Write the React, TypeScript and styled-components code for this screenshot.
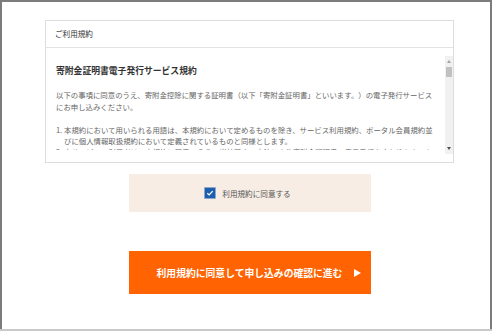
import React from "react";
import styled, { createGlobalStyle } from "styled-components";

const GlobalStyle = createGlobalStyle`
  html, body {
    margin: 0;
    padding: 0;
    background: #c9c9c9;
  }
  body {
    font-family: "Noto Sans CJK JP", "Noto Sans", sans-serif;
    text-spacing-trim: space-all;
  }
  * { box-sizing: border-box; }
`;

const Frame = styled.div`
  width: 492px;
  height: 329px;
  background: #ffffff;
  border: 2px solid #7c7c7c;
  border-bottom: none;
  overflow: hidden;
`;

const Column = styled.div`
  width: 409px;
  margin-left: 43px;
  padding-top: 18px;
  display: flex;
  flex-direction: column;
  align-items: center;
`;

const Card = styled.section`
  width: 100%;
  border: 1px solid #dddddd;
  background: #fff;
`;

const CardHeader = styled.div`
  height: 27px;
  line-height: 26px;
  padding-left: 9px;
  border-bottom: 1px solid #e3e3e3;
  font-size: 7.6px;
  color: #333;
`;

const CardBody = styled.div`
  padding: 8px 0 8px 10px;
`;

const ScrollBox = styled.div`
  height: 98px;
  display: flex;
`;

const TextArea = styled.div`
  flex: 1;
  overflow: hidden;
  margin-bottom: 4px;
  padding: 8px 6px 0 0;
`;

const Title = styled.h2`
  margin: 0 0 11px;
  font-size: 8.8px;
  line-height: 14px;
  font-weight: 700;
  color: #333;
`;

const Para = styled.p`
  margin: 0 0 12px;
  font-size: 7.4px;
  line-height: 11.5px;
  color: #666;
`;

const List = styled.ol`
  margin: 0;
  padding: 0;
  list-style: none;
`;

const Item = styled.li`
  display: flex;
  font-size: 7.4px;
  line-height: 11px;
  color: #666;
`;

const Marker = styled.span`
  flex: 0 0 8px;
`;

const ItemText = styled.span`
  flex: 1;
`;

const ScrollBar = styled.div`
  width: 8px;
  background: #f1f1f1;
  display: flex;
  flex-direction: column;
  align-items: center;
`;

const ScrollButton = styled.div`
  height: 11px;
  width: 100%;
  display: flex;
  align-items: center;
  justify-content: center;
`;

const Arrow = styled.span<{ $dir: "up" | "down" }>`
  width: 0;
  height: 0;
  border-left: 2.5px solid transparent;
  border-right: 2.5px solid transparent;
  ${({ $dir }) =>
    $dir === "up"
      ? "border-bottom: 3px solid #a3a3a3;"
      : "border-top: 3px solid #505050;"}
`;

const Thumb = styled.div`
  width: 6px;
  height: 10px;
  background: #c1c1c1;
`;

const Spacer = styled.div`
  flex: 1;
`;

const AgreePanel = styled.label`
  margin-top: 11px;
  width: 242px;
  height: 38px;
  background: #f7ede5;
  display: flex;
  align-items: center;
  justify-content: center;
  gap: 6px;
  padding-right: 4px;
  font-size: 7.6px;
  color: #555;
`;

const CheckBox = styled.span`
  width: 12px;
  height: 12px;
  background: #1d5fae;
  border: 1px solid #8aa6c9;
  border-radius: 1px;
  display: flex;
  align-items: center;
  justify-content: center;
`;

const ProceedButton = styled.button`
  margin-top: 39px;
  width: 242px;
  height: 43px;
  border: none;
  background: #ff6302;
  color: #fff;
  font-family: inherit;
  font-size: 9.8px;
  font-weight: 700;
  display: grid;
  grid-template-columns: 1fr auto 1fr;
  align-items: center;
  padding: 0;
  cursor: pointer;
`;

const ButtonLabel = styled.span`
  grid-column: 2;
`;

const PlayIcon = styled.span`
  grid-column: 3;
  justify-self: end;
  margin-right: 10px;
  width: 0;
  height: 0;
  border-top: 4.5px solid transparent;
  border-bottom: 4.5px solid transparent;
  border-left: 7px solid #fff;
`;

export default function App() {
  return (
    <>
      <GlobalStyle />
      <Frame>
        <Column>
          <Card>
            <CardHeader>ご利用規約</CardHeader>
            <CardBody>
              <ScrollBox>
                <TextArea>
                  <Title>寄附金証明書電子発行サービス規約</Title>
                  <Para>
                    以下の事項に同意のうえ、寄附金控除に関する証明書（以下「寄附金証明書」といいます。）の電子発行サービスにお申し込みください。
                  </Para>
                  <List>
                    <Item>
                      <Marker>1.</Marker>
                      <ItemText>
                        本規約において用いられる用語は、本規約において定めるものを除き、サービス利用規約、ポータル会員規約並びに個人情報取扱規約において定義されているものと同様とします。
                      </ItemText>
                    </Item>
                    <Item>
                      <Marker>2.</Marker>
                      <ItemText>
                        本サービスの利用者は、本規約に同意のうえ、当社所定の方法により寄附金証明書の電子発行を申し込むものとします。
                      </ItemText>
                    </Item>
                  </List>
                </TextArea>
                <ScrollBar>
                  <ScrollButton>
                    <Arrow $dir="up" />
                  </ScrollButton>
                  <Thumb />
                  <Spacer />
                  <ScrollButton>
                    <Arrow $dir="down" />
                  </ScrollButton>
                </ScrollBar>
              </ScrollBox>
            </CardBody>
          </Card>
          <AgreePanel>
            <CheckBox>
              <svg width="8" height="8" viewBox="0 0 8 8">
                <path d="M1.3 4.2 L3.1 5.9 L6.7 2.1" fill="none" stroke="#fff" strokeWidth="1.3" />
              </svg>
            </CheckBox>
            利用規約に同意する
          </AgreePanel>
          <ProceedButton type="button">
            <ButtonLabel>利用規約に同意して申し込みの確認に進む</ButtonLabel>
            <PlayIcon />
          </ProceedButton>
        </Column>
      </Frame>
    </>
  );
}
